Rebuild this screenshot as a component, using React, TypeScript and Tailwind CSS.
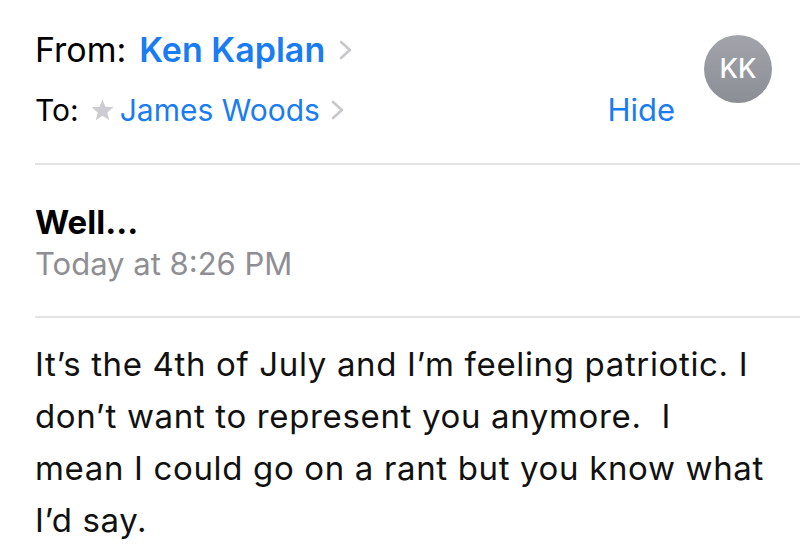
import React from 'react';

const font = { fontFamily: 'Inter, "Noto Sans", sans-serif' };

function Chevron({ className }: { className: string }) {
  return (
    <svg width="15" height="20" viewBox="0 0 15 20" className={'shrink-0 ' + className}>
      <polyline points="3,2 12,10 3,18" fill="none" stroke="#c7c7cc" strokeWidth="2.6" strokeLinecap="round" strokeLinejoin="round" />
    </svg>
  );
}

function Star() {
  return (
    <svg width="23" height="22" viewBox="0 0 24 23" className="mr-[6px] shrink-0">
      <polygon points="12,0.5 15.1,8.2 23.5,8.7 17,14 19.1,22.2 12,17.6 4.9,22.2 7,14 0.5,8.7 8.9,8.2" fill="#cdcdd1" />
    </svg>
  );
}

export default function App() {
  return (
    <div className="w-[800px] h-[554px] overflow-hidden bg-white text-black" style={font}>
      <div className="flex pl-[35px] pr-[28px] pt-[35px]">
        <div className="flex-1">
          <div className="flex items-center h-[30px] text-[34px] leading-[30px]">
            <span>From:</span>
            <span className="ml-[13px] font-semibold text-[#1a7cf2]">Ken Kaplan</span>
            <Chevron className="ml-[13px]" />
          </div>
          <div className="flex items-center h-[30px] mt-[30px] text-[30px] leading-[30px]">
            <span>To:</span>
            <span className="ml-[12px] flex items-center">
              <Star />
              <span className="text-[#1a7cf2]">James Woods</span>
            </span>
            <Chevron className="ml-[10px]" />
          </div>
        </div>
        <div className="self-end h-[30px] text-[31px] leading-[30px] text-[#1a7cf2] mr-[29px]">Hide</div>
        <div className="w-[68px] h-[68px] rounded-full bg-gradient-to-b from-[#a2a4aa] to-[#8b8e95] flex items-center justify-center text-white text-[27px] font-medium">
          KK
        </div>
      </div>
      <div className="ml-[35px] mt-[38px] h-[2px] bg-[#e3e3e5]" />
      <div className="pl-[35px] pt-[40px]">
        <div className="text-[33px] leading-[34px] font-bold">Well...</div>
        <div className="mt-[8px] text-[31px] leading-[34px] text-[#8e8e93]">Today at 8:26 PM</div>
      </div>
      <div className="ml-[35px] mt-[35px] h-[2px] bg-[#e3e3e5]" />
      <div className="pl-[35px] pt-[20px] text-[33px] leading-[52px] tracking-[0.65px] text-[#111] whitespace-pre">
        <div>It’s the 4th of July and I’m feeling patriotic. I</div>
        <div>don’t want to represent you anymore.  I</div>
        <div>mean I could go on a rant but you know what</div>
        <div>I’d say.</div>
      </div>
    </div>
  );
}
